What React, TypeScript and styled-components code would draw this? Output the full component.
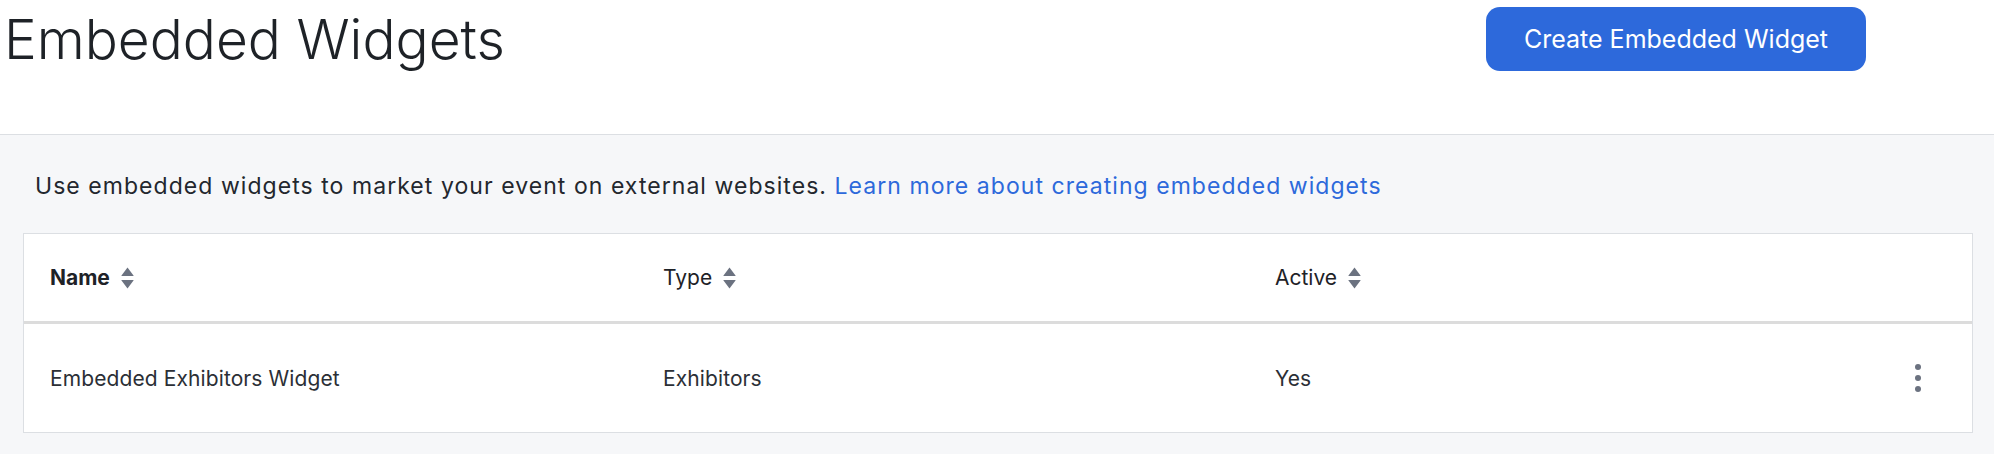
import React from "react";
import styled, { createGlobalStyle } from "styled-components";

const GlobalStyle = createGlobalStyle`
  * { box-sizing: border-box; }
  html, body { margin: 0; padding: 0; background: #ffffff; }
  body {
    font-family: Inter, "Noto Sans", "Liberation Sans", sans-serif;
    color: #23272e;
    -webkit-font-smoothing: antialiased;
  }
`;

const Page = styled.div`
  width: 1994px;
  min-height: 454px;
  display: flex;
  flex-direction: column;
  background: #f6f7f9;
`;

const Header = styled.header`
  height: 135px;
  display: flex;
  align-items: flex-start;
  justify-content: space-between;
  background: #ffffff;
  border-bottom: 1px solid #dcdfe3;
  padding: 0 128px 0 4px;
`;

const Title = styled.h1`
  margin: 12px 0 0 0;
  font-size: 55px;
  line-height: 55px;
  font-weight: 300;
  letter-spacing: 0;
  color: #1e2227;
`;

const PrimaryButton = styled.button`
  margin-top: 7px;
  width: 380px;
  height: 64px;
  border: none;
  border-radius: 14px;
  background: #2d69db;
  color: #ffffff;
  font-family: inherit;
  font-size: 25px;
  font-weight: 400;
  display: flex;
  align-items: center;
  justify-content: center;
  cursor: pointer;
`;

const Body = styled.main`
  padding: 37px 21px 22px 23px;
  display: flex;
  flex-direction: column;
  gap: 33px;
`;

const Intro = styled.p`
  margin: 0 0 0 12px;
  font-size: 23px;
  line-height: 28px;
  letter-spacing: 1.05px;
  color: #23272e;
`;

const Link = styled.a`
  color: #2d69db;
  text-decoration: none;
`;

const Table = styled.div`
  background: #ffffff;
  border: 1px solid #dcdfe3;
`;

const Row = styled.div<{ $head?: boolean }>`
  display: grid;
  grid-template-columns: 613px 612px 1fr 110px;
  align-items: center;
  height: ${(p) => (p.$head ? "90px" : "108px")};
  border-bottom: ${(p) => (p.$head ? "3px solid #dcdcdc" : "none")};
`;

const HeadCell = styled.div`
  display: flex;
  align-items: center;
  gap: 11px;
  padding-left: 26px;
  font-size: 21px;
  color: #1e2227;
`;

const HeadLabel = styled.span<{ $bold?: boolean }>`
  font-weight: ${(p) => (p.$bold ? 700 : 400)};
`;

const Cell = styled.div`
  padding-left: 26px;
  font-size: 21px;
  font-weight: 400;
  letter-spacing: 0.1px;
  color: #2b2f36;
`;

const ActionCell = styled.div`
  display: flex;
  justify-content: flex-start;
  padding-left: 50px;
`;

const MenuButton = styled.button`
  border: none;
  background: transparent;
  padding: 0;
  width: 12px;
  height: 30px;
  display: flex;
  align-items: center;
  justify-content: center;
  cursor: pointer;
`;

const SortIcon = () => (
  <svg width="13" height="22" viewBox="0 0 13 22" aria-hidden="true">
    <path d="M6.5 0.5 L12.5 8.5 Q12.8 9 12.2 9 L0.8 9 Q0.2 9 0.5 8.5 Z" fill="#6b7280" />
    <path d="M6.5 21.5 L12.5 13.5 Q12.8 13 12.2 13 L0.8 13 Q0.2 13 0.5 13.5 Z" fill="#6b7280" />
  </svg>
);

const DotsIcon = () => (
  <svg width="8" height="30" viewBox="0 0 8 30" aria-hidden="true">
    <circle cx="4" cy="4" r="3" fill="#6b7280" />
    <circle cx="4" cy="15" r="3" fill="#6b7280" />
    <circle cx="4" cy="26" r="3" fill="#6b7280" />
  </svg>
);

const columns = [
  { label: "Name", bold: true },
  { label: "Type", bold: false },
  { label: "Active", bold: false },
];

const rows = [{ name: "Embedded Exhibitors Widget", type: "Exhibitors", active: "Yes" }];

export default function App() {
  return (
    <>
      <GlobalStyle />
      <Page>
        <Header>
          <Title>Embedded Widgets</Title>
          <PrimaryButton>Create Embedded Widget</PrimaryButton>
        </Header>
        <Body>
          <Intro>
            Use embedded widgets to market your event on external websites.{" "}
            <Link href="#">Learn more about creating embedded widgets</Link>
          </Intro>
          <Table>
            <Row $head>
              {columns.map((c) => (
                <HeadCell key={c.label}>
                  <HeadLabel $bold={c.bold}>{c.label}</HeadLabel>
                  <SortIcon />
                </HeadCell>
              ))}
              <div />
            </Row>
            {rows.map((r) => (
              <Row key={r.name}>
                <Cell>{r.name}</Cell>
                <Cell>{r.type}</Cell>
                <Cell>{r.active}</Cell>
                <ActionCell>
                  <MenuButton aria-label="More actions">
                    <DotsIcon />
                  </MenuButton>
                </ActionCell>
              </Row>
            ))}
          </Table>
        </Body>
      </Page>
    </>
  );
}
